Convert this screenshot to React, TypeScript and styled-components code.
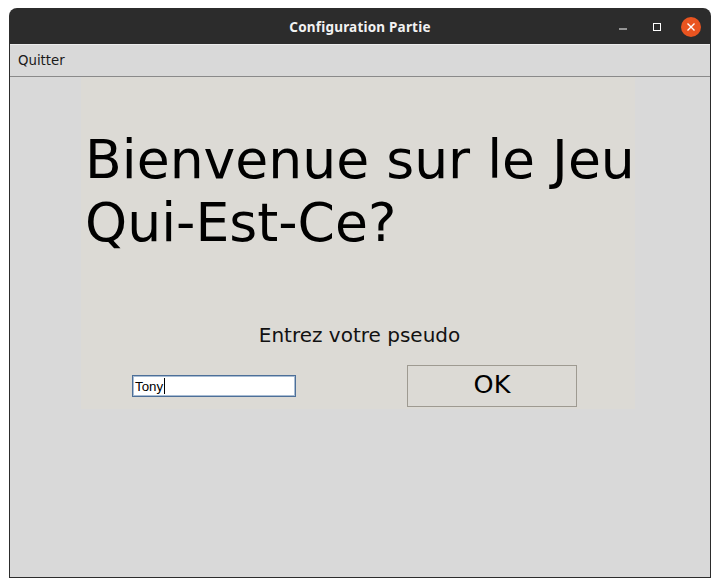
import styled, { createGlobalStyle } from "styled-components";

const GlobalStyle = createGlobalStyle`
  html, body {
    margin: 0;
    padding: 0;
    background: #ffffff;
  }
  body {
    font-family: "DejaVu Sans", sans-serif;
  }
`;

const Page = styled.div`
  padding: 8px 0 0 9px;
  width: 720px;
  height: 587px;
  box-sizing: border-box;
`;

const Window = styled.div`
  width: 702px;
  height: 570px;
  box-sizing: border-box;
  background: #2c2c2c;
  border-radius: 8px 8px 0 0;
  padding: 0 1px 1px 1px;
  display: flex;
  flex-direction: column;
`;

const TitleBar = styled.div`
  height: 37px;
  display: grid;
  grid-template-columns: 1fr auto 1fr;
  align-items: center;
`;

const Title = styled.div`
  grid-column: 2;
  color: #f2f2f2;
  font-family: "Noto Sans", "DejaVu Sans", sans-serif;
  font-weight: 700;
  font-size: 13.5px;
  letter-spacing: 0.2px;
`;

const Controls = styled.div`
  grid-column: 3;
  justify-self: end;
  display: flex;
  align-items: center;
  gap: 14px;
  padding-right: 9px;
`;

const ControlButton = styled.div<{ $close?: boolean }>`
  width: 20px;
  height: 20px;
  display: flex;
  align-items: center;
  justify-content: center;
  border-radius: 50%;
  background: ${p => (p.$close ? "#e95420" : "transparent")};
`;

const Client = styled.div`
  flex: 1;
  background: #d9d9d9;
  display: flex;
  flex-direction: column;
`;

const MenuBar = styled.div`
  height: 31px;
  border-top: 1px solid #ececec;
  border-bottom: 1px solid #8a8a8a;
  box-sizing: content-box;
  margin-top: -1px;
  display: flex;
  align-items: center;
  padding-left: 8px;
`;

const MenuItem = styled.span`
  font-size: 13.3px;
  color: #1a1a1a;
`;

const Panel = styled.div`
  width: 554px;
  margin-left: 71px;
  background: #dcdad5;
  display: flex;
  flex-direction: column;
  padding: 51px 0 2px 0;
`;

const Headline = styled.div`
  font-size: 53.6px;
  line-height: 63px;
  color: #000000;
  padding-left: 4px;
`;

const Prompt = styled.div`
  margin-top: 70px;
  font-size: 20px;
  line-height: 23px;
  color: #111111;
  text-align: center;
  padding-left: 3px;
`;

const InputRow = styled.div`
  margin-top: 18px;
  display: flex;
  align-items: center;
  padding-left: 51px;
  gap: 111px;
`;

const Entry = styled.div`
  width: 164px;
  height: 22px;
  box-sizing: border-box;
  background: #ffffff;
  border: 1px solid #4d6f98;
  box-shadow: inset 0 0 0 1px #a9bdd4;
  display: flex;
  align-items: center;
  padding-left: 2px;
  font-family: "Liberation Sans", Arial, sans-serif;
  font-size: 13.3px;
  color: #000000;
`;

const Caret = styled.span`
  display: inline-block;
  width: 1px;
  height: 16px;
  margin-left: 1px;
  background: #000000;
`;

const OkButton = styled.button`
  width: 170px;
  height: 42px;
  box-sizing: border-box;
  background: #dcdad5;
  border: 1px solid #9e9a91;
  border-radius: 0;
  font-family: "DejaVu Sans", sans-serif;
  font-size: 25.5px;
  line-height: 1;
  color: #000000;
  padding: 0 0 3px 0;
  cursor: pointer;
`;

export default function App() {
  return (
    <Page>
      <GlobalStyle />
      <Window>
        <TitleBar>
          <Title>Configuration Partie</Title>
          <Controls>
            <ControlButton>
              <svg width="20" height="20" viewBox="0 0 20 20">
                <line x1="6" y1="12" x2="14" y2="12" stroke="#ffffff" strokeWidth="1" />
              </svg>
            </ControlButton>
            <ControlButton>
              <svg width="20" height="20" viewBox="0 0 20 20">
                <rect x="6.5" y="6.5" width="7" height="7" fill="none" stroke="#ffffff" strokeWidth="1" />
              </svg>
            </ControlButton>
            <ControlButton $close>
              <svg width="20" height="20" viewBox="0 0 20 20">
                <path d="M6.5 6.5 L13.5 13.5 M13.5 6.5 L6.5 13.5" stroke="#ffffff" strokeWidth="1.4" />
              </svg>
            </ControlButton>
          </Controls>
        </TitleBar>
        <Client>
          <MenuBar>
            <MenuItem>Quitter</MenuItem>
          </MenuBar>
          <Panel>
            <Headline>
              Bienvenue sur le Jeu
              <br />
              Qui-Est-Ce?
            </Headline>
            <Prompt>Entrez votre pseudo</Prompt>
            <InputRow>
              <Entry>
                Tony
                <Caret />
              </Entry>
              <OkButton>OK</OkButton>
            </InputRow>
          </Panel>
        </Client>
      </Window>
    </Page>
  );
}
